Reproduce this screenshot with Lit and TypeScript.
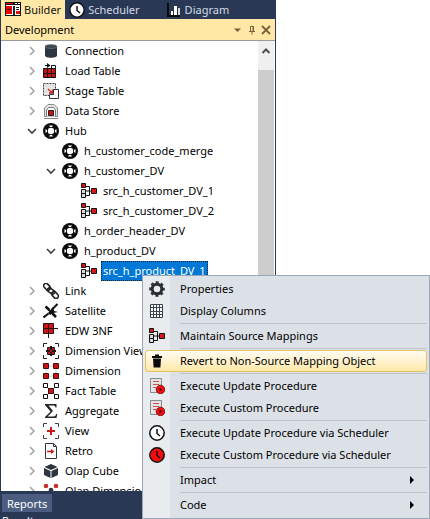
import { LitElement, html, svg, css, nothing } from "lit";
import { customElement, property, state } from "lit/decorators.js";
import { classMap } from "lit/directives/class-map.js";

const clock = (fill: string) => svg`
  <circle cx="8" cy="8" r="7.200" fill=${fill} stroke="#111" stroke-width="1.500"/>
  <path d="M8 4v4.500l3 2.500" fill="none" stroke="#111" stroke-width="1.500"/>`;

const procedure = svg`
  <path d="M1.500 .5h11v14h-11z" fill="#e4e4e4" stroke="#8a8a8a"/>
  <path d="M4 3.500h6M4 6.500h6M4 9.500h3" stroke="#d05050"/>
  <circle cx="11.500" cy="11.500" r="4.300" fill="#f01010" stroke="#7a0000" stroke-width=".8"/>
  <path d="M10.500 9.800v3.400l2.600-1.700z" fill="#300"/>`;

const ICONS: Record<string, unknown> = {
  builder: svg`<path d="M0 0h16v14H0z" fill="#111"/><path d="M1 3h14v10H1z" fill="#fff"/>
    <path d="M1 1h7v1H1zM1 4h6v8H1z" fill="#f00000"/><path d="M10 1h2v1h-2zM13 1h2v1h-2z" fill="#fff"/>
    <path d="M2 7h4v1H2zM8 4h2v9H8zM11 5h3v1h-3zM11 7h3v1h-3z" fill="#222"/><path d="M11 9h4v3h-4z" fill="#e01010"/>`,
  scheduler: clock("#fff"),
  diagram: svg`<path d="M2 1v13h12" fill="none" stroke="#0a0a0a" stroke-width="2"/>
    <path d="M5 9h2v4H5zM8 4h3v9H8z" fill="#fff"/><path d="M12 6h2v7h-2z" fill="#d8d8d8"/>`,
  connection: svg`<path d="M2 3.500v9c0 3 12 3 12 0v-9z" fill="#2c3540"/><ellipse cx="8" cy="3.500" rx="6" ry="2" fill="#3c4854" stroke="#6b7884" stroke-width=".6"/>`,
  load: svg`<path d="M.5 5.500h12v9H.5z" fill="#c81414"/><path d="M8.500 2.500h4v3h-4z" fill="#fff"/>
    <path d="M.5 5.500h12v9H.5zM.5 10.500h12M4.500 5.500v9M8.500 5.500v9M8.500 5.500v-3h4v3" fill="none" stroke="#111"/>
    <path d="M2 2.500h3" stroke="#111"/><path d="M4 0l3.500 2.500L4 5z" fill="#111"/>`,
  stage: svg`<path d="M.5 .5h12v12H.5z" fill="#e2e4e6" stroke="#3a3f48" stroke-dasharray="2 1"/>
    <path d="M10.500 6.500h5v9h-9v-4h4z" fill="#fff" stroke="#2c3540"/><path d="M5 6l4.500 4M9.500 6.500V10H6" fill="none" stroke="#d02020" stroke-width="1.300"/>`,
  store: svg`<path d="M1.500 13.500V5L5 1.500h6L14.500 5v8.500z" fill="#e4e4e4" stroke="#8a8a8a"/><path d="M3.500 13.500V7L5.500 4.500h5l2 2.500v6.500" fill="#fff" stroke="#777"/>
    <path d="M5.500 7.500h5v5h-5z" fill="#c81414" stroke="#222"/><path d="M1 15.500h14" stroke="#888"/>`,
  hub: svg`<circle cx="8" cy="8" r="8" fill="#0b0b0b"/>
    <path d="M6 2.500h4L9 4H7zM6 13.500h4L9 12H7zM2.500 6v4L4 9V7zM13.500 6v4L12 9V7z" fill="#fff"/>
    <circle cx="8" cy="8" r="3.200" fill="#fff"/>`,
  source: svg`<path d="M4 3.500h4.500v9H4M4 8h7" fill="none" stroke="#111"/><path d="M.5 .5h4v4h-4z" fill="#d81818" stroke="#111"/>
    <path d="M.5 6.500h4v4h-4zM.5 10.500h4v4h-4z" fill="#ddd" stroke="#111"/><path d="M10.500 5.500h5v5h-5z" fill="#d81818" stroke="#111"/>`,
  link: svg`<g fill="none" stroke="#222" stroke-width="1.600"><rect x="-3.800" y="-2.300" width="7.600" height="4.600" rx="2.300" transform="translate(4 3.800) rotate(48)"/>
    <rect x="-3.800" y="-2" width="7.600" height="4" rx="2" transform="translate(8 8) rotate(35)"/><rect x="-3.800" y="-2.300" width="7.600" height="4.600" rx="2.300" transform="translate(12 12) rotate(48)"/></g>`,
  satellite: svg`<path d="M2.500 3.500l3.500 3M9.500 10.500l3.500 3.500" stroke="#111" stroke-width="2.600"/><path d="M.5 14.500l5-4M9 6.500L14.500 1M5 6l6 6" stroke="#111" stroke-width="2"/><path d="M5 10l5-6 1 4 4 1-5 1-3 2z" fill="#111"/>`,
  edw: svg`<path d="M.5 .5h10v10H.5z" fill="#c81414" stroke="#301010"/><path d="M0 5.500h15M5.500 0v15" fill="none" stroke="#301010"/>`,
  dimview: svg`<path d="M.5 4V.5H4M12 .5h3.500V4M15.500 12v3.500H12M4 15.500H.5V12" fill="none" stroke="#222"/>
    <path d="M5 4h6v1h1v6h-1v1H5v-1H4V5h1z" fill="#c81414"/><path d="M7 3h2v10H7zM3 7h10v2H3z" fill="#1a1a1a"/><path d="M4.500 4.500h7v7h-7z" fill="none" stroke="#1a1a1a"/><path d="M7 7h2v2H7z" fill="#c81414"/>`,
  dimension: svg`<path d="M3 3h10v10H3z" fill="none" stroke="#c5ccc8"/><path d="M.5 .5h5v5h-5zM10.500 .5h5v5h-5zM.5 10.500h5v5h-5zM10.500 10.500h5v5h-5z" fill="#c81414" stroke="#401010"/>`,
  fact: svg`<path d="M3 3l10 10M13 3L3 13" stroke="#111"/><path d="M.5 .5h4v4h-4zM11.500 .5h4v4h-4zM.5 11.500h4v4h-4zM11.500 11.500h4v4h-4z" fill="#fff" stroke="#111"/><path d="M5.500 5.500h5v5h-5z" fill="#c81414" stroke="#401010"/>`,
  aggregate: svg`<path d="M2 1h11.500v3.500h-1C12.300 3 11.500 2.500 10 2.500H5.500L10 8l-5.500 5.500h6c1.500 0 2.200-.8 2.800-2.500h.9L13.500 15H2v-1l5.500-5.500L2 2z" fill="#222"/>`,
  view: svg`<path d="M.5 4V.5H4M12 .5h3.500V4M15.500 12v3.500H12M4 15.500H.5V12" fill="none" stroke="#3a4550"/><path d="M8 4v8M4 8h8" stroke="#d01818" stroke-width="2"/>`,
  retro: svg`<path d="M2.500 .5h8l3 3v12h-11z" fill="#fff" stroke="#2c3540"/><path d="M10.500 .5v3h3" fill="none" stroke="#2c3540"/><path d="M4 8.500h5" stroke="#d01818" stroke-width="1.500"/><path d="M8 6l3.500 2.500L8 11z" fill="#d01818"/>`,
  cube: svg`<path d="M8 1l6.500 3L8 7 1.500 4zM1 5l6.500 3v7L1 12zM15 5L8.500 8v7l6.500-3z" fill="#2c3540"/>`,
  olapdim: svg`<circle cx="3" cy="3" r="2.300" fill="#c83030"/><circle cx="13" cy="3" r="2.300" fill="#c83030"/><circle cx="8" cy="7" r="2.300" fill="#2c3540"/><circle cx="3" cy="12" r="2.300" fill="#c83030"/><circle cx="13" cy="12" r="2.300" fill="#c83030"/>`,
  gear: svg`<circle cx="8" cy="8" r="4.800" fill="none" stroke="#2a2e33" stroke-width="3"/><circle cx="8" cy="8" r="6.800" fill="none" stroke="#2a2e33" stroke-width="2" stroke-dasharray="3 2.340" stroke-dashoffset="1.500"/>`,
  grid: svg`<path d="M1.500 1.500h12v13h-12z" fill="#fff"/><path d="M1.500 1.500h12v13h-12zM1.500 4.500h12M1.500 8.500h12M1.500 11.500h12M4.500 1.500v13M7.500 1.500v13M10.500 1.500v13" fill="none" stroke="#3a4550"/>`,
  trash: svg`<path d="M3 3h10v2H3zM6 1.500h4V3H6zM4 5.500h8l-.6 9H4.600z" fill="#0a0a0a"/>`,
  procedure,
  clock: clock("#fff"),
  redclock: clock("#f50c0c"),
};

const icon = (name: string) => html`<svg class="icon" viewBox="0 0 16 16" width="16" height="16" aria-hidden="true">${ICONS[name]}</svg>`;

interface Row { label: string; icon: string; level: number; open?: boolean; leaf?: boolean; selected?: boolean }
const ROWS: Row[] = [
  { label: "Connection", icon: "connection", level: 0 },
  { label: "Load Table", icon: "load", level: 0 },
  { label: "Stage Table", icon: "stage", level: 0 },
  { label: "Data Store", icon: "store", level: 0 },
  { label: "Hub", icon: "hub", level: 0, open: true },
  { label: "h_customer_code_merge", icon: "hub", level: 1, leaf: true },
  { label: "h_customer_DV", icon: "hub", level: 1, open: true },
  { label: "src_h_customer_DV_1", icon: "source", level: 2, leaf: true },
  { label: "src_h_customer_DV_2", icon: "source", level: 2, leaf: true },
  { label: "h_order_header_DV", icon: "hub", level: 1, leaf: true },
  { label: "h_product_DV", icon: "hub", level: 1, open: true },
  { label: "src_h_product_DV_1", icon: "source", level: 2, leaf: true, selected: true },
  { label: "Link", icon: "link", level: 0 },
  { label: "Satellite", icon: "satellite", level: 0 },
  { label: "EDW 3NF", icon: "edw", level: 0 },
  { label: "Dimension View", icon: "dimview", level: 0 },
  { label: "Dimension", icon: "dimension", level: 0 },
  { label: "Fact Table", icon: "fact", level: 0 },
  { label: "Aggregate", icon: "aggregate", level: 0 },
  { label: "View", icon: "view", level: 0 },
  { label: "Retro", icon: "retro", level: 0 },
  { label: "Olap Cube", icon: "cube", level: 0 },
  { label: "Olap Dimension", icon: "olapdim", level: 0 },
];

const font = css`
  :host { font-family: "Noto Sans", "Open Sans", sans-serif; font-size: 11px; color: #000; }
  * { box-sizing: border-box; }
  button { font: inherit; color: inherit; background: none; border: 0; padding: 0; margin: 0; }
  svg { display: block; flex: none; }
`;

@customElement("object-tree")
class ObjectTree extends LitElement {
  @state() private rows = ROWS;

  static styles = [font, css`
    :host { display: flex; background: #fff; overflow: hidden; min-height: 0; }
    ul { flex: 1; min-width: 0; margin: 0; padding: 0 0 0 24px; list-style: none; }
    li { display: flex; align-items: center; height: 20px; }
    .level-1 { padding-left: 19px; }
    .level-2 { padding-left: 38px; }
    .toggle { width: 14px; height: 14px; margin-right: 4px; flex: none; }
    .name { margin-left: 4px; padding: 0 2px; height: 20px; line-height: 19px; white-space: nowrap; }
    .selected { background: #0078d7; color: #fff; outline: 1px dotted #222; outline-offset: -1px; }
    .track { flex: none; width: 16px; margin-right: 1px; background: #cdcdcd; }
    .up { display: grid; place-items: center; width: 16px; height: 29px; padding-bottom: 10px; background: #f0f0f0; }
  `];

  render() {
    return html`
      <ul role="tree">
        ${this.rows.map((r) => html`
          <li role="treeitem" class="level-${r.level}" aria-expanded=${r.leaf ? nothing : String(!!r.open)}>
            ${r.leaf ? html`<span class="toggle"></span>` : html`
              <button class="toggle" aria-label="Toggle ${r.label}">
                <svg viewBox="0 0 14 14" width="14" height="14">
                  <path d=${r.open ? "M3 5l4 4 4-4" : "M5 3l4 4-4 4"} fill="none" stroke=${r.open ? "#404040" : "#a6a6a6"} stroke-width="1.600"/>
                </svg>
              </button>`}
            ${icon(r.icon)}
            <span class=${classMap({ name: true, selected: !!r.selected })}>${r.label}</span>
          </li>`)}
      </ul>
      <div class="track">
        <button class="up" aria-label="Scroll up"><svg viewBox="0 0 10 10" width="10" height="10"><path d="M1.500 7L5 3.500 8.500 7" fill="none" stroke="#505050" stroke-width="2"/></svg></button>
      </div>`;
  }
}

interface Entry { label: string; icon?: string; active?: boolean; submenu?: boolean }
const GROUPS: Entry[][] = [
  [{ label: "Properties", icon: "gear" }, { label: "Display Columns", icon: "grid" }],
  [{ label: "Maintain Source Mappings", icon: "source" }],
  [{ label: "Revert to Non-Source Mapping Object", icon: "trash", active: true }],
  [{ label: "Execute Update Procedure", icon: "procedure" }, { label: "Execute Custom Procedure", icon: "procedure" }],
  [{ label: "Execute Update Procedure via Scheduler", icon: "clock" }, { label: "Execute Custom Procedure via Scheduler", icon: "redclock" }],
  [{ label: "Impact", submenu: true }],
  [{ label: "Code", submenu: true }],
];

@customElement("context-menu")
class ContextMenu extends LitElement {
  @property({ attribute: false }) groups = GROUPS;

  static styles = [font, css`
    :host { display: block; border: 1px solid #9ba7b7; padding: 2px; background: linear-gradient(90deg, #e9ecee 27px, #dce0e7 27px); }
    .group + .group { margin-top: 1px; }
    .group + .group::before { content: ""; display: block; height: 1px; margin: 0 0 1px 35px; background: #bec3cb; }
    .item { display: grid; grid-template-columns: 16px 1fr 10px; column-gap: 15px; align-items: center; width: 100%; height: 22px;
      padding: 0 8px 0 3px; text-align: left; white-space: nowrap; border: 1px solid transparent; border-radius: 3px; }
    .label { padding-bottom: 1px; }
    .active { border-color: #e5c365; background: linear-gradient(#fffcf2, #fff0c8 60%, #ffe8a6); }
  `];

  render() {
    return html`<div role="menu">${this.groups.map((g) => html`
      <div class="group" role="group">${g.map((e) => html`
        <button role="menuitem" class=${classMap({ item: true, active: !!e.active })}>
          ${e.icon ? icon(e.icon) : html`<span></span>`}
          <span class="label">${e.label}</span>
          ${e.submenu ? html`<svg viewBox="0 0 10 10" width="10" height="10"><path d="M2 1l4 4-4 4z" fill="#000"/></svg>` : nothing}
        </button>`)}
      </div>`)}</div>`;
  }
}

@customElement("app-root")
class AppRoot extends LitElement {
  static styles = [font, css`
    :host { display: block; position: relative; height: 100vh; overflow: hidden; background: #fff; }
    .panel { display: flex; flex-direction: column; width: 276px; height: 100%; background: #293955; }
    .tabs { display: flex; flex: none; height: 19px; padding-left: 1px; }
    .tab { display: flex; align-items: center; gap: 3px; padding: 0 4px; color: #d6dbe6; white-space: nowrap; }
    .tab.current { background: #ffe8a6; color: #111; }
    .tab.wide { margin-left: 18px; }
    .title { display: flex; flex: none; align-items: center; height: 22px; margin: 0 1px; padding: 0 4px; gap: 4px;
      background: #ffe8a6; border-bottom: 1px solid #9a9a9a; }
    .title h1 { flex: 1; margin: 0; font-size: 11px; font-weight: 400; }
    object-tree { flex: 1; margin: 0 1px; }
    .bottom { flex: none; height: 28px; padding: 3px 2px 0; overflow: hidden; }
    .reports { display: block; height: 18px; padding: 0 5px; background: #4b5e81; color: #fff; }
    .result { margin: 1px 0 0; color: #fff; }
    context-menu { position: absolute; left: 142px; right: 0; top: 275px; }
  `];

  render() {
    return html`
      <section class="panel">
        <nav class="tabs">
          <button class="tab current">${icon("builder")}Builder</button>
          <button class="tab">${icon("scheduler")}Scheduler</button>
          <button class="tab wide">${icon("diagram")}Diagram</button>
        </nav>
        <header class="title">
          <h1>Development</h1>
          <button aria-label="Window position"><svg viewBox="0 0 10 10" width="10" height="10"><path d="M1 3.500h7l-3.500 3.500z" fill="#75633d"/></svg></button>
          <button aria-label="Auto hide"><svg viewBox="0 0 10 10" width="10" height="10"><path d="M3.500 6V1.500h3V6M2 6.500h6M5 6.500V9.500M6 1.500V6" fill="none" stroke="#75633d"/></svg></button>
          <button aria-label="Close"><svg viewBox="0 0 10 10" width="10" height="10"><path d="M1 1l8 8M9 1L1 9" stroke="#75633d" stroke-width="1.800"/></svg></button>
        </header>
        <object-tree></object-tree>
        <footer class="bottom">
          <button class="reports">Reports</button>
          <p class="result">Results</p>
        </footer>
      </section>
      <context-menu></context-menu>`;
  }
}
